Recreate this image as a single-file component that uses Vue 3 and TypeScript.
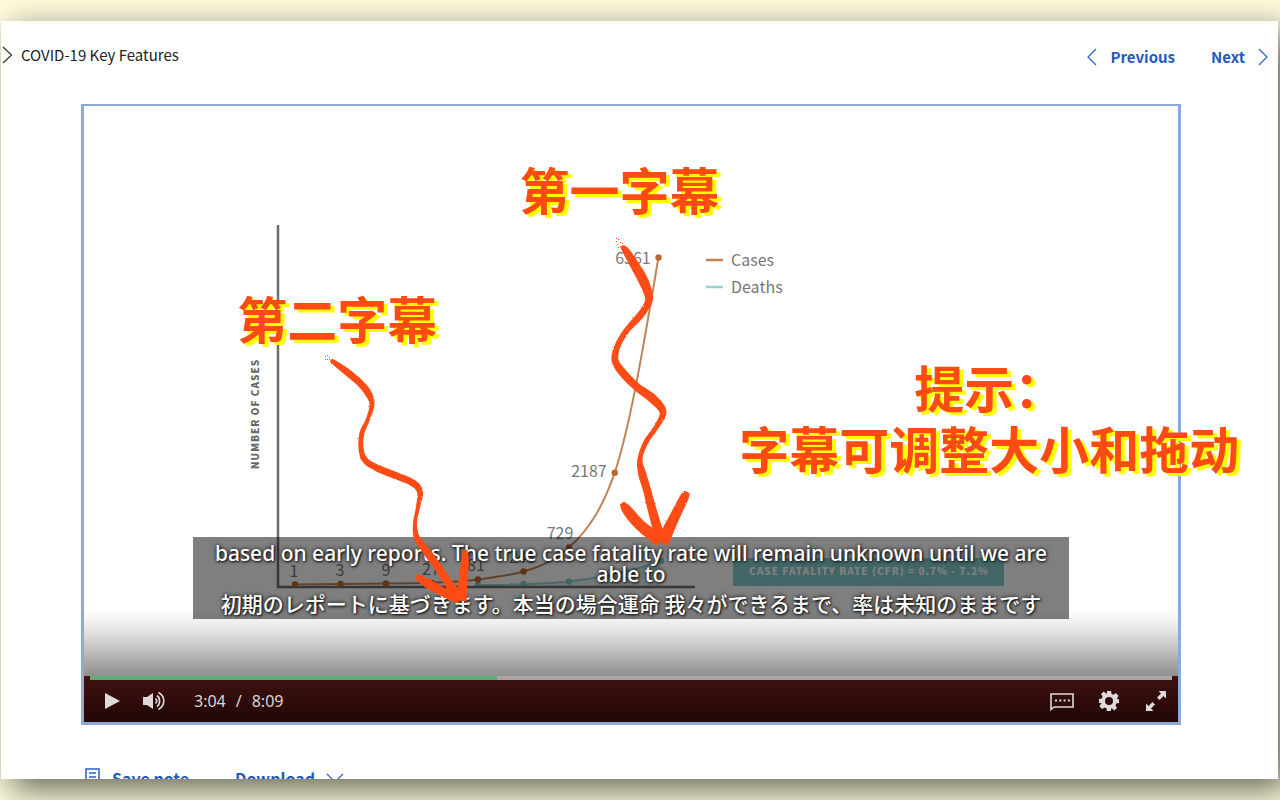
<script setup lang="ts">
import { computed, ref } from 'vue'

type BrushPoint = [x: number, y: number, width: number]

interface DataPoint {
  x: number
  y: number
  label: string
  lx: number
  ly: number
}

const duration = 489
const position = ref(184)

const format = (s: number): string => `${Math.floor(s / 60)}:${String(s % 60).padStart(2, '0')}`
const played = computed(() => `${(position.value / duration) * 100}%`)

const cases: DataPoint[] = [
  { x: 295, y: 584.5, label: '1', lx: 294, ly: 577 },
  { x: 340.5, y: 584, label: '3', lx: 340, ly: 576 },
  { x: 386, y: 583.5, label: '9', lx: 386, ly: 576 },
  { x: 432, y: 583, label: '27', lx: 431, ly: 575 },
  { x: 478, y: 579.5, label: '81', lx: 476, ly: 571 },
  { x: 523.5, y: 571.5, label: '243', lx: 522, ly: 563 },
  { x: 569, y: 547.5, label: '729', lx: 560, ly: 539 },
  { x: 614.7, y: 472.8, label: '2187', lx: 589, ly: 477 },
  { x: 658.5, y: 257.5, label: '6561', lx: 633, ly: 264 },
]

const deaths = [
  { x: 478, y: 585 },
  { x: 523.5, y: 584 },
  { x: 569, y: 581.5 },
  { x: 661, y: 561 },
]

/* Samples a Catmull-Rom spline through the points and returns a closed outline of varying width. */
function brush(points: BrushPoint[]): string {
  const samples: BrushPoint[] = []
  const at = (i: number): BrushPoint => points[Math.max(0, Math.min(points.length - 1, i))]
  for (let i = 0; i < points.length - 1; i++) {
    for (let s = 0; s < 8; s++) {
      const t = s / 8
      const value = (k: 0 | 1 | 2): number => {
        const a = at(i - 1)[k]
        const b = at(i)[k]
        const c = at(i + 1)[k]
        const d = at(i + 2)[k]
        return 0.5 * (2 * b + (c - a) * t + (2 * a - 5 * b + 4 * c - d) * t * t + (3 * b - a - 3 * c + d) * t * t * t)
      }
      samples.push([value(0), value(1), value(2)])
    }
  }
  samples.push(at(points.length - 1))
  const left: string[] = []
  const right: string[] = []
  samples.forEach(([x, y, w], i) => {
    const p = samples[Math.max(0, i - 1)]
    const n = samples[Math.min(samples.length - 1, i + 1)]
    const dx = n[0] - p[0]
    const dy = n[1] - p[1]
    const len = Math.hypot(dx, dy) || 1
    const ox = (-dy / len) * (w / 2)
    const oy = (dx / len) * (w / 2)
    left.push(`${(x + ox).toFixed(1)} ${(y + oy).toFixed(1)}`)
    right.unshift(`${(x - ox).toFixed(1)} ${(y - oy).toFixed(1)}`)
  })
  return `M${left.concat(right).join('L')}Z`
}

const strokes: string[] = [
  brush([[622, 246, 4], [626, 251, 7], [634, 264, 9], [643, 280, 10], [649, 297, 8], [646, 307, 7], [638, 318, 7], [627, 330, 6], [618, 345, 6], [615, 360, 7], [623, 373, 8], [637, 387, 8], [653, 399, 9], [663, 412, 7], [657, 426, 5], [646, 442, 5], [640, 459, 5], [642, 473, 8], [647, 490, 8], [653, 513, 9], [661, 541, 10]]),
  brush([[622, 503, 5], [627, 510, 10], [640, 525, 11], [660, 541, 12]]),
  brush([[687, 492, 6], [684, 498, 9], [676, 514, 10], [662, 543, 13]]),
  brush([[331, 360, 3], [335, 363, 5], [347, 372, 7], [360, 383, 7], [368, 393, 7], [372, 404, 5], [368, 419, 4], [362, 433, 5], [361, 448, 5], [365, 460, 6], [377, 468, 7], [397, 476, 7], [413, 483, 7], [420, 492, 6], [418, 507, 4], [415, 523, 4], [417, 538, 6], [427, 552, 8], [440, 570, 8], [458, 598, 10]]),
  brush([[416, 576, 5], [427, 583, 9], [443, 592, 9], [460, 599, 10]]),
  brush([[465, 550, 5], [465, 563, 8], [463, 580, 9], [461, 601, 11]]),
]

const specks: [number, number][] = [
  [616, 241], [618, 239], [617, 244], [620, 242], [620, 246], [622, 243], [618, 247], [622, 248], [624, 246], [616, 238],
  [325, 356], [327, 355], [327, 359], [329, 357], [330, 361], [329, 359], [332, 359], [331, 363], [325, 359],
]
</script>

<template>
  <div class="page">
    <main class="card">
      <header class="header">
        <nav class="crumb" aria-label="Breadcrumb">
          <svg class="crumb-chevron" viewBox="0 0 12 18" aria-hidden="true"><path d="M1 1L9.500 9L1 17" /></svg>
          <span>COVID-19 Key Features</span>
        </nav>
        <nav class="pager" aria-label="Lesson">
          <a href="#previous" class="link">
            <svg class="chevron" viewBox="0 0 12 18" aria-hidden="true"><path d="M10 1L2 9L10 17" /></svg>
            <span>Previous</span>
          </a>
          <a href="#next" class="link">
            <span>Next</span>
            <svg class="chevron" viewBox="0 0 12 18" aria-hidden="true"><path d="M2 1L10 9L2 17" /></svg>
          </a>
        </nav>
      </header>

      <section class="player">
        <svg class="layer" viewBox="84 106 1094 616" role="img" aria-label="Chart of cases and deaths">
          <g class="series">
            <path class="area" d="M478 586C510 586 545 584 569 581.500C600 578 635 570 661 561V586Z" />
            <path class="deaths" d="M478 585C510 585 545 584 569 581.500C600 578 635 570 661 561" />
            <circle v-for="p in deaths" :key="p.x" class="deaths-dot" :cx="p.x" :cy="p.y" r="3.2" />
          </g>
          <path class="axis" d="M278 225V587H695" />
          <path class="cases" d="M295 584.500L386 583.500L432 583C448 582 463 581.500 478 579.500C493 577.500 509 575.500 523.500 571.500C540 567 556 560 569 547.500C592 527 604 503 614.700 472.800C632 420 646 330 658.500 257.500" />
          <g v-for="p in cases" :key="p.label">
            <circle class="cases-dot" :cx="p.x" :cy="p.y" r="3.2" />
            <text class="chart-text" :x="p.lx" :y="p.ly" text-anchor="middle">{{ p.label }}</text>
          </g>
          <path class="cases key" d="M706 260H723" />
          <text class="chart-text" x="731" y="266">Cases</text>
          <path class="deaths key" d="M706 287H723" />
          <text class="chart-text" x="731" y="293">Deaths</text>
          <text class="axis-title" transform="translate(259 414) rotate(-90)" text-anchor="middle">NUMBER OF CASES</text>
          <rect class="rate-box" x="733" y="558" width="271" height="28" />
          <text class="rate-text" x="869" y="575" text-anchor="middle">CASE FATALITY RATE (CFR) = 0.7% - 7.2%</text>
        </svg>

        <div class="controls">
          <input
            v-model.number="position"
            class="seek"
            type="range"
            min="0"
            :max="duration"
            aria-label="Seek"
            :style="{ '--played': played }"
          />
          <div class="bar">
            <button type="button" class="control" aria-label="Play">
              <svg viewBox="0 0 24 24"><path class="solid" d="M5 4L20 12L5 20Z" /></svg>
            </button>
            <button type="button" class="control volume" aria-label="Mute">
              <svg viewBox="0 0 24 24">
                <path class="solid" d="M1 8H5L11 4V20L5 16H1Z" />
                <path class="wave" d="M13.500 9.500C15 11 15 13 13.500 14.500M15 6.500C18.500 9 18.500 15 15 17.500M16.500 3.500C23.500 7.500 23.500 16.500 16.500 20.500" />
              </svg>
            </button>
            <div class="time"><span>{{ format(position) }}</span><span>/</span><span>{{ format(duration) }}</span></div>
            <div class="right">
              <button type="button" class="control" aria-label="Captions">
                <svg viewBox="0 0 24 24">
                  <path class="bubble" d="M1 5H23V18H4L1 20.500Z" />
                  <path class="solid" d="M5 10.500H7V12.500H5ZM9.300 10.500H11.300V12.500H9.300ZM13.600 10.500H15.600V12.500H13.600ZM17.900 10.500H19.900V12.500H17.900Z" />
                </svg>
              </button>
              <button type="button" class="control" aria-label="Settings">
                <svg viewBox="0 0 24 24">
                  <path class="solid" fill-rule="evenodd" d="M10 2H14L14.600 4.900L16.400 5.700L18.900 4.100L21.600 6.900L20 9.300L20.700 10.200H22V14L19.300 14.600L18.500 16.400L20 18.900L17.200 21.600L14.800 19.300L14 19.700V22H10L9.400 19.300L7.600 18.500L5.100 20L2.400 17.200L4 14.800L4.700 14H2V10L4.900 9.400L5.500 7.600L4 5.100L6.800 2.400L9.200 4.700L10 4.300ZM12 8A4 4 0 1 0 12 16A4 4 0 1 0 12 8Z" />
                </svg>
              </button>
              <button type="button" class="control" aria-label="Full screen">
                <svg viewBox="0 0 24 24">
                  <path class="solid" d="M14.500 2H22V9.500L19.500 7L15.500 11L13 8.500L17 4.500ZM9.500 22H2V14.500L4.500 17L8.500 13L11 15.500L7 19.500Z" />
                </svg>
              </button>
            </div>
          </div>
        </div>

        <div class="captions">
          <p class="caption-en">based on early reports. The true case fatality rate will remain unknown until we are able to</p>
          <p class="caption-ja" lang="ja">初期のレポートに基づきます。本当の場合運命 我々ができるまで、率は未知のままです</p>
        </div>

        <svg class="layer arrows" viewBox="84 106 1094 616" aria-hidden="true">
          <filter id="rough" x="-10%" y="-10%" width="120%" height="120%">
            <feTurbulence type="fractalNoise" baseFrequency="0.6" numOctaves="2" seed="4" />
            <feDisplacementMap in="SourceGraphic" scale="2" />
          </filter>
          <g filter="url(#rough)">
            <path v-for="(d, i) in strokes" :key="i" class="ink" :d="d" />
          </g>
          <rect v-for="([x, y], i) in specks" :key="`s${i}`" class="ink" :x="x" :y="y" width="1" height="1" />
        </svg>

        <p class="note first" lang="zh">第一字幕</p>
        <p class="note second" lang="zh">第二字幕</p>
        <p class="note tip" lang="zh">提示：<br />字幕可调整大小和拖动</p>
      </section>

      <footer class="actions">
        <button type="button" class="link">
          <svg class="note-icon" viewBox="0 0 16 20" aria-hidden="true"><path d="M1 1H14V19H1ZM4 5H11M4 9H11M4 13H11" /></svg>
          <span>Save note</span>
        </button>
        <button type="button" class="link">
          <span>Download</span>
          <svg class="down" viewBox="0 0 18 12" aria-hidden="true"><path d="M1 2L9 10L17 2" /></svg>
        </button>
      </footer>
    </main>
  </div>
</template>

<style>
body {
  margin: 0;
  background: #fefcdc;
}
</style>

<style scoped>
.page {
  box-sizing: border-box;
  height: 100vh;
  padding: 21px 2px 21px 1px;
  overflow: hidden;
  font-family: "Noto Sans CJK SC", "Noto Sans", sans-serif;
  background: #fefcdc;
}

.card {
  box-sizing: border-box;
  height: 100%;
  overflow: hidden;
  background: #fff;
  box-shadow: 10px 10px 32px rgba(0, 0, 0, 0.62);
}

p {
  margin: 0;
}

.header {
  display: flex;
  justify-content: space-between;
  height: 83px;
  padding-right: 9px;
}

.crumb {
  display: flex;
  align-items: center;
  gap: 7px;
  height: 68px;
  font-size: 15px;
  line-height: 24px;
  color: #222;
}

.crumb-chevron,
.chevron {
  width: 12px;
  height: 18px;
  fill: none;
  stroke: #333;
  stroke-width: 1.2;
}

.crumb-chevron {
  margin-left: 1px;
}

.chevron,
.down,
.note-icon {
  fill: none;
  stroke: #2a5fbe;
  stroke-width: 1.2;
}

.pager {
  display: flex;
  align-items: center;
  gap: 36px;
  height: 72px;
}

.link {
  display: flex;
  align-items: center;
  gap: 12px;
  padding: 0;
  border: 0;
  background: none;
  font-family: inherit;
  font-size: 16px;
  font-weight: 700;
  line-height: 24px;
  color: #2459bd;
  text-decoration: none;
}

.pager .link {
  font-size: 15px;
}

.player {
  position: relative;
  margin: 0 97px 0 80px;
  aspect-ratio: 1094 / 616;
  border: solid #8da9d8;
  border-width: 2px 3px 3px;
}

.layer {
  position: absolute;
  inset: 0;
  width: 100%;
  height: 100%;
}

.arrows {
  pointer-events: none;
}

.axis {
  fill: none;
  stroke: #6c6c6c;
  stroke-width: 2.5;
}

.cases,
.deaths {
  fill: none;
  stroke: #c08458;
  stroke-width: 2;
}

.deaths {
  stroke: #96d2d2;
}

.key {
  stroke-width: 2.5;
}

.area {
  fill: #dff1ef;
}

.cases-dot {
  fill: #b9682f;
}

.deaths-dot {
  fill: #7fcaca;
}

.chart-text {
  font-size: 16px;
  fill: #777;
}

.axis-title {
  font-size: 10px;
  font-weight: 900;
  letter-spacing: 1px;
  fill: #666;
}

.rate-box {
  fill: #84cccc;
}

.rate-text {
  font-size: 10px;
  font-weight: 900;
  letter-spacing: 1px;
  fill: #fff;
}

.controls {
  position: absolute;
  right: 0;
  bottom: 0;
  left: 0;
  padding-top: 66px;
  background: linear-gradient(rgba(0, 0, 0, 0), rgba(0, 0, 0, 0.12) 35%, rgba(0, 0, 0, 0.44)) top / 100% 66px no-repeat;
}

.bar {
  display: flex;
  align-items: center;
  box-sizing: border-box;
  height: 46px;
  padding: 4px 10px 0 16px;
  background: linear-gradient(#3f1111, #220606);
}

.seek {
  position: absolute;
  top: 66px;
  right: 6px;
  left: 6px;
  width: calc(100% - 12px);
  height: 4px;
  margin: 0;
  appearance: none;
  background: linear-gradient(#62ab72, #62ab72) left / var(--played) 100% no-repeat #aaa5a5;
}

.seek::-webkit-slider-thumb {
  width: 0;
  height: 0;
  appearance: none;
}

.control {
  width: 24px;
  height: 24px;
  padding: 0;
  border: 0;
  background: none;
}

.control svg {
  display: block;
  width: 24px;
  height: 24px;
}

.volume {
  margin-left: 18px;
}

.solid {
  fill: #dedada;
}

.wave,
.bubble {
  fill: none;
  stroke: #dedada;
  stroke-width: 1.6;
}

.time {
  display: flex;
  gap: 10px;
  margin-left: 28px;
  font-family: "Noto Sans", sans-serif;
  font-size: 16px;
  font-weight: 400;
  line-height: 24px;
  color: #dcd6d6;
}

.right {
  display: flex;
  gap: 23px;
  margin-left: auto;
}

.captions {
  position: absolute;
  right: 10%;
  bottom: 103px;
  left: 10%;
  box-sizing: border-box;
  padding: 6px 8px 5px;
  background: rgba(0, 0, 0, 0.5);
  font-family: "Noto Sans", sans-serif;
  font-size: 21px;
  line-height: 21px;
  text-align: center;
  color: #fff;
  text-shadow: 0 0 4px #000, 1px 1px 2px #222;
}

.caption-en {
  font-weight: 500;
}

.caption-ja {
  padding-top: 8px;
  font-family: "Noto Sans CJK JP", sans-serif;
  font-weight: 500;
}

.ink {
  fill: #ff4b12;
}

.note {
  position: absolute;
  font-size: 50px;
  font-weight: 700;
  line-height: 61px;
  text-align: center;
  white-space: nowrap;
  color: #ff4b12;
  text-shadow: 4px 3px 0 #ff0;
}

.first {
  top: 8.4%;
  left: 39.8%;
}

.second {
  top: 29.4%;
  left: 14%;
}

.tip {
  top: 40.6%;
  left: 59.9%;
}

.actions {
  display: flex;
  align-items: center;
  gap: 46px;
  height: 106px;
  padding-left: 84px;
}

.actions .link {
  gap: 11px;
}

.note-icon {
  width: 16px;
  height: 20px;
  stroke-width: 1.5;
}

.down {
  width: 18px;
  height: 12px;
}
</style>
